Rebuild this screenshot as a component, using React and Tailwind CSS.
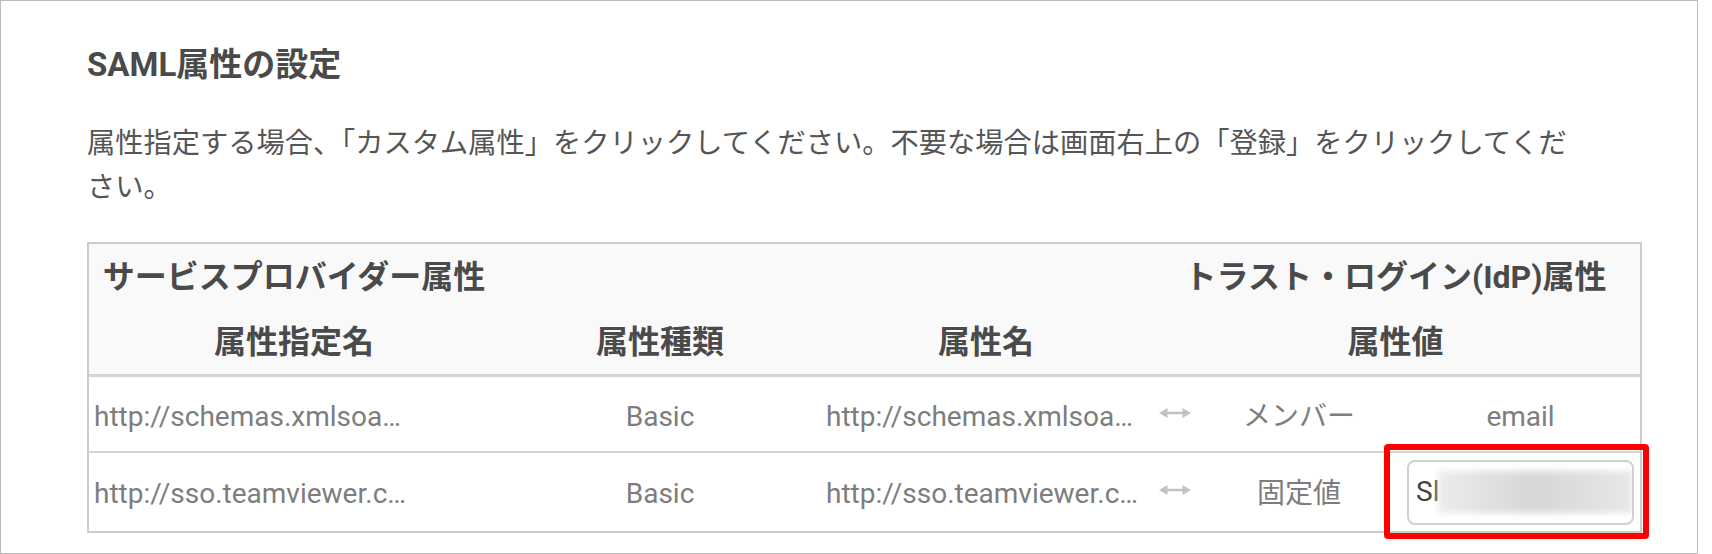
import React from 'react';

const rows = [
  { name: 'http://schemas.xmlsoa…', kind: 'Basic', attr: 'http://schemas.xmlsoa…', type: 'メンバー', value: 'email' },
  { name: 'http://sso.teamviewer.c…', kind: 'Basic', attr: 'http://sso.teamviewer.c…', type: '固定値', value: null },
];

const Arrow = () => (
  <svg width="32" height="14" viewBox="0 0 32 14" className="shrink-0">
    <line x1="6" y1="7" x2="26" y2="7" stroke="#c2c2c2" strokeWidth="2.5" />
    <polygon points="0,7 8.5,2 8.5,12" fill="#c2c2c2" />
    <polygon points="32,7 23.5,2 23.5,12" fill="#c2c2c2" />
  </svg>
);

const App = () => {
  return (
    <div className="w-[1698px] h-[554px] border border-[#bbbbbb] bg-white pl-[86px] pt-10 font-[family-name:Roboto,'Noto_Sans_CJK_JP',sans-serif]">
      <h1 className="text-[33px] leading-[48px] font-bold text-[#4a4a4a]">SAML属性の設定</h1>

      <p className="mt-[33px] w-[1495px] text-[28.25px] leading-[44px] text-[#555555]">
        属性指定する場合、「カスタム属性」をクリックしてください。不要な場合は画面右上の「登録」をクリックしてください。
      </p>

      {/* attribute table */}
      <div className="mt-8 w-[1555px] border-2 border-[#cccccc]">
        <div className="bg-[#f9f9f9] border-b-[3px] border-[#d4d4d4] text-[32px] font-bold text-[#4a4a4a]">
          <div className="grid grid-cols-[410px_322px_330px_489px] h-[65px] items-center">
            <div className="text-center whitespace-nowrap">サービスプロバイダー属性</div>
            <div />
            <div />
            <div className="text-center whitespace-nowrap">トラスト・ログイン(IdP)属性</div>
          </div>
          <div className="grid grid-cols-[410px_322px_330px_489px] h-[65px] items-center">
            <div className="text-center">属性指定名</div>
            <div className="text-center">属性種類</div>
            <div className="text-center">属性名</div>
            <div className="text-center">属性値</div>
          </div>
        </div>

        {rows.map((r, i) => (
          <div
            key={i}
            className={
              i === 0
                ? 'grid grid-cols-[410px_322px_330px_489px] h-[76px] items-center pt-[6px] border-b-2 border-[#d4d4d4] text-[28px] text-[#7d7d7d]'
                : 'grid grid-cols-[410px_322px_330px_489px] h-[78px] items-center pt-[4px] text-[28px] text-[#7d7d7d]'
            }
          >
            <div className="pl-[5px] whitespace-nowrap overflow-hidden">{r.name}</div>
            <div className="text-center">{r.kind}</div>
            <div className="pl-[5px] whitespace-nowrap overflow-hidden">{r.attr}</div>
            <div className="flex items-center pl-[8px]">
              <div className="-mt-2"><Arrow /></div>
              <div className="w-[216px] text-center">{r.type}</div>
              {r.value ? (
                <div className="w-[227px] text-center">{r.value}</div>
              ) : (
                <div className="relative w-[227px] h-[65px] -mt-1">
                  <div className="w-full h-full flex items-center pl-[7px] border-2 border-[#d0d0d0] rounded-lg text-[#444444] overflow-hidden">
                    <span>Sl</span>
                    <span className="-ml-[1px] w-[205px] h-[42px] bg-linear-to-r from-[#ececec] via-[#d6d6d6] to-[#e8e8e8] blur-[3px]" />
                  </div>
                  <div className="absolute -left-[23px] -top-[16px] -right-[15px] -bottom-[14px] border-[6px] border-[#ff0000] rounded-[4px]" />
                </div>
              )}
            </div>
          </div>
        ))}
      </div>
    </div>
  );
};

export default App;
